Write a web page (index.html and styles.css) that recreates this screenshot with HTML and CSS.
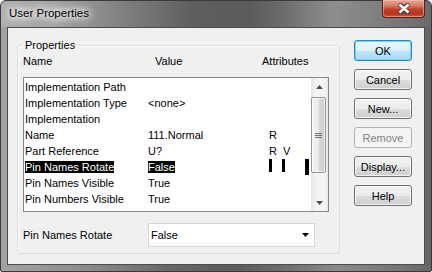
FILE: index.html
```html
<!DOCTYPE html>
<html lang="en">
<head>
  <meta charset="UTF-8">
  <title>User Properties</title>
  <link rel="stylesheet" href="styles.css">
</head>
<body>

<div class="window">
  <div class="titlebar">
    <span class="title">User Properties</span>
    <button class="close-btn">
      <svg width="14" height="11" viewBox="0 0 14 11">
        <path d="M2 1 L7 4.5 L12 1 M2 10 L7 6.5 L12 10" stroke="#3a3a3a" stroke-width="4" fill="none"/>
        <path d="M2.5 1.5 L11.5 9.5 M11.5 1.5 L2.5 9.5" stroke="#fff" stroke-width="2.4" fill="none"/>
      </svg>
    </button>
  </div>

  <div class="client">
    <fieldset class="group">
      <legend>Properties</legend>

      <div class="col-head">
        <span class="h-name">Name</span>
        <span class="h-value">Value</span>
        <span>Attributes</span>
      </div>

      <div class="listbox">
        <div class="rows">
          <div class="row"><span class="c-name">Implementation Path</span><span class="c-value"></span><span class="c-attr"></span></div>
          <div class="row"><span class="c-name">Implementation Type</span><span class="c-value">&lt;none&gt;</span><span class="c-attr"></span></div>
          <div class="row"><span class="c-name">Implementation</span><span class="c-value"></span><span class="c-attr"></span></div>
          <div class="row"><span class="c-name">Name</span><span class="c-value">111.Normal</span><span class="c-attr">R</span></div>
          <div class="row"><span class="c-name">Part Reference</span><span class="c-value">U?</span><span class="c-attr">R&nbsp; V</span></div>
          <div class="row selected">
            <span class="c-name"><span class="hl">Pin Names Rotate</span></span>
            <span class="c-value"><span class="hl">False</span></span>
            <span class="c-attr bars"><i class="bar"></i><i class="bar"></i><i class="bar wide"></i></span>
          </div>
          <div class="row"><span class="c-name">Pin Names Visible</span><span class="c-value">True</span><span class="c-attr"></span></div>
          <div class="row"><span class="c-name">Pin Numbers Visible</span><span class="c-value">True</span><span class="c-attr"></span></div>
        </div>

        <div class="scrollbar">
          <div class="sb-btn">
            <svg width="7" height="4" viewBox="0 0 7 4"><polygon points="0,4 3.5,0 7,4" fill="#4d4d4d"/></svg>
          </div>
          <div class="sb-track">
            <div class="sb-thumb">
              <svg width="7" height="7" viewBox="0 0 7 7">
                <path d="M0 1.5 H7 M0 3.5 H7 M0 5.5 H7" stroke="#6f6f6f" stroke-width="1"/>
              </svg>
            </div>
          </div>
          <div class="sb-btn">
            <svg width="7" height="4" viewBox="0 0 7 4"><polygon points="0,0 3.5,4 7,0" fill="#4d4d4d"/></svg>
          </div>
        </div>
      </div>

      <div class="edit-row">
        <span class="edit-label">Pin Names Rotate</span>
        <div class="combo">
          <span>False</span>
          <svg width="7" height="4" viewBox="0 0 7 4"><polygon points="0,0 3.5,4 7,0" fill="#000"/></svg>
        </div>
      </div>
    </fieldset>

    <div class="buttons">
      <button class="btn btn-default">OK</button>
      <button class="btn">Cancel</button>
      <button class="btn">New...</button>
      <button class="btn" disabled>Remove</button>
      <button class="btn">Display...</button>
      <button class="btn">Help</button>
    </div>
  </div>
</div>

</body>
</html>
```

FILE: styles.css
```css
body {
  margin: 0;
  background: #fff;
  font-family: "Liberation Sans", Arial, sans-serif;
  font-size: 11px;
}

.window {
  width: 432px;
  height: 272px;
  box-sizing: border-box;
  border: 1px solid #3a3a3a;
  border-radius: 6px 6px 2px 2px;
  padding: 0 6px 6px 6px;
  background: linear-gradient(to right, #a2a2a2 0%, #8c8c8c 20%, #666 40%, #5c5c5c 55%, #6c6c6c 65%, #8a8a8a 78%, #777 92%, #666 100%);
  display: flex;
  flex-direction: column;
}

.titlebar {
  height: 26px;
  display: flex;
  justify-content: space-between;
  align-items: flex-start;
  margin: 0 -6px;
  padding: 0 6px;
  border-radius: 6px 6px 0 0;
  background: linear-gradient(to right, #b0b0b0 0%, #a4a4a4 12%, #7c7c7c 30%, #5e5e5e 45%, #5b5b5b 58%, #6d6d6d 66%, #8e8e8e 77%, #7c7c7c 90%, #6a6a6a 100%);
}

.title {
  font-size: 11.5px;
  line-height: 14px;
  padding: 5px 0 0 2px;
  color: #000;
  text-shadow: 0 0 6px #fff, 0 0 8px #fff, 0 0 10px #fff, 0 0 14px #fff;
}

.close-btn {
  width: 43px;
  height: 18px;
  margin-top: -1px;
  padding: 0;
  border: 1px solid #4a2420;
  border-top: none;
  border-radius: 0 0 4px 4px;
  background: linear-gradient(#e8a898 0%, #d47a66 35%, #c2402a 55%, #b83220 80%, #c85a3e 100%);
  box-shadow: inset 0 0 0 1px rgba(255, 200, 180, 0.5);
  display: flex;
  align-items: center;
  justify-content: center;
}

.client {
  flex: 1;
  display: flex;
  align-items: flex-start;
  background: #f0f0f0;
  border: 1px solid #4c4c4c;
}

.group {
  margin: 11px 0 0 9px;
  padding: 3px 10px 6px 5px;
  width: 323px;
  box-sizing: border-box;
  border: 1px solid #d5dfe5;
  border-radius: 3px;
  box-shadow: inset 1px 1px #fff;
}

.group legend {
  padding: 0 2px;
  line-height: 13px;
}

.col-head {
  display: flex;
  line-height: 13px;
  margin-bottom: 9px;
}

.h-name {
  width: 132px;
}

.h-value {
  width: 107px;
}

.listbox {
  display: flex;
  height: 135px;
  box-sizing: border-box;
  border: 1px solid #828790;
  background: #fff;
}

.rows {
  flex: 1;
  padding: 1px 0 0 1px;
}

.row {
  display: flex;
  height: 16px;
  line-height: 16px;
  white-space: nowrap;
}

.c-name {
  width: 123px;
}

.c-value {
  width: 120px;
}

.c-attr {
  flex: 1;
  padding-left: 1px;
}

.hl {
  background: #000;
  color: #fff;
}

.bars {
  display: flex;
  align-items: flex-start;
  gap: 10px;
}

.bar {
  width: 3px;
  height: 13px;
  background: #000;
}

.bar.wide {
  width: 4px;
  height: 16px;
  margin-left: 10px;
}

.scrollbar {
  width: 17px;
  display: flex;
  flex-direction: column;
  background: linear-gradient(to right, #e3e3e3, #f4f4f4 30%, #f4f4f4 80%, #e8e8e8);
}

.sb-btn {
  height: 17px;
  display: flex;
  align-items: center;
  justify-content: center;
}

.sb-track {
  flex: 1;
  padding-top: 2px;
}

.sb-thumb {
  height: 76px;
  margin: 0 2px 0 0;
  box-sizing: border-box;
  border: 1px solid #979797;
  border-radius: 2px;
  background: linear-gradient(to right, #f6f6f6, #e9e9e9 50%, #d8d8d8 51%, #cfcfcf);
  box-shadow: inset 0 0 0 1px rgba(255, 255, 255, 0.6);
  display: flex;
  align-items: center;
  justify-content: center;
}

.edit-row {
  display: flex;
  align-items: center;
  margin-top: 11px;
}

.edit-label {
  width: 125px;
}

.combo {
  width: 167px;
  height: 24px;
  box-sizing: border-box;
  border: 1px solid #d4d8de;
  background: #fff;
  display: flex;
  align-items: center;
  justify-content: space-between;
  padding: 0 5px 0 2px;
}

.buttons {
  display: flex;
  flex-direction: column;
  gap: 8px;
  margin: 12px 0 0 14px;
}

.btn {
  width: 58px;
  height: 21px;
  padding: 0;
  font-family: "Liberation Sans", Arial, sans-serif;
  font-size: 11px;
  color: #000;
  border: 1px solid #707070;
  border-radius: 3px;
  background: linear-gradient(#f2f2f2 0%, #ebebeb 50%, #dddddd 51%, #cfcfcf 100%);
  box-shadow: inset 0 0 0 1px rgba(255, 255, 255, 0.7);
}

.btn-default {
  border-color: #3c7fb1;
  background: linear-gradient(#eaf6fd 0%, #d9f0fc 50%, #bee6fd 51%, #a7d9f5 100%);
  box-shadow: inset 0 0 0 1px #6fd3fb;
}

.btn:disabled {
  border-color: #adb2b5;
  background: #f4f4f4;
  color: #838383;
  box-shadow: none;
}
```
